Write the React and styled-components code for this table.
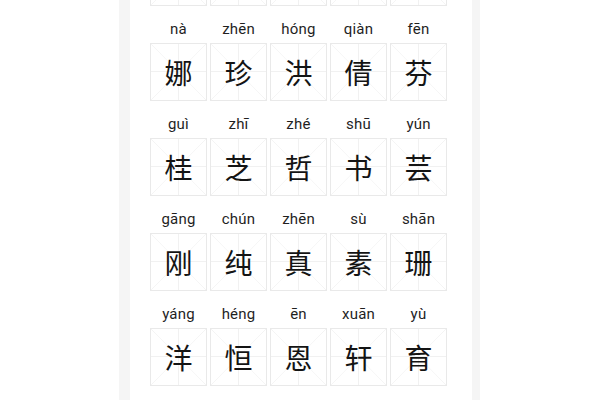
import React from 'react';
import styled, { createGlobalStyle } from 'styled-components';

const GlobalStyle = createGlobalStyle`
  html, body {
    margin: 0;
    padding: 0;
    background: #ffffff;
    overflow: hidden;
  }
  body {
    font-family: Roboto, "Noto Sans", "Noto Sans CJK SC", sans-serif;
  }
`;

const Page = styled.div`
  width: 600px;
  height: 400px;
  overflow: hidden;
  display: flex;
  justify-content: flex-start;
  padding-left: 119px;
  box-sizing: border-box;
`;

const Frame = styled.div`
  width: 361px;
  height: 100%;
  background: #f5f5f5;
  padding: 0 8px 0 11px;
  box-sizing: border-box;
`;

const Card = styled.div`
  background: #ffffff;
  height: 100%;
  padding: 0 25px 0 20px;
  box-sizing: border-box;
  overflow: hidden;
`;

const List = styled.div`
  margin-top: -78px;
  display: flex;
  flex-direction: column;
  gap: 11px;
`;

const Row = styled.div`
  display: grid;
  grid-template-columns: repeat(5, 57px);
  column-gap: 3px;
  row-gap: 2px;
`;

const Pinyin = styled.div`
  height: 24px;
  line-height: 24px;
  text-align: center;
  font-size: 15px;
  color: #1f1f1f;
  letter-spacing: 0.2px;
`;

const line = '#f1f1f1';
const diag = '#f4f4f4';

const Cell = styled.div`
  height: 58px;
  border: 1px solid #e9e9e9;
  box-sizing: border-box;
  display: flex;
  align-items: center;
  justify-content: center;
  font-family: "Noto Sans CJK SC", sans-serif;
  font-size: 28px;
  color: #141414;
  background:
    linear-gradient(to right, transparent calc(50% - 0.5px), ${line} calc(50% - 0.5px), ${line} calc(50% + 0.5px), transparent calc(50% + 0.5px)),
    linear-gradient(to bottom, transparent calc(50% - 0.5px), ${line} calc(50% - 0.5px), ${line} calc(50% + 0.5px), transparent calc(50% + 0.5px)),
    linear-gradient(to top right, transparent calc(50% - 0.6px), ${diag} 50%, transparent calc(50% + 0.6px)),
    linear-gradient(to bottom right, transparent calc(50% - 0.6px), ${diag} 50%, transparent calc(50% + 0.6px)),
    #ffffff;
`;

const rows = [
  [['lí', '丽'], ['xīn', '欣'], ['yǔ', '雨'], ['wén', '雯'], ['jìng', '静']],
  [['nà', '娜'], ['zhēn', '珍'], ['hóng', '洪'], ['qiàn', '倩'], ['fēn', '芬']],
  [['guì', '桂'], ['zhī', '芝'], ['zhé', '哲'], ['shū', '书'], ['yún', '芸']],
  [['gāng', '刚'], ['chún', '纯'], ['zhēn', '真'], ['sù', '素'], ['shān', '珊']],
  [['yáng', '洋'], ['héng', '恒'], ['ēn', '恩'], ['xuān', '轩'], ['yù', '育']],
  [['lǐ', '里'], ['huān', '欢'], ['dōng', '冬'], ['mèng', '梦'], ['yáo', '瑶']],
];

export default function App() {
  return (
    <>
      <GlobalStyle />
      <Page>
        <Frame>
          <Card>
            <List>
              {rows.map((row, i) => (
                <Row key={i}>
                  {row.map(([py], j) => (
                    <Pinyin key={'p' + j}>{py}</Pinyin>
                  ))}
                  {row.map(([, ch], j) => (
                    <Cell key={'c' + j}>{ch}</Cell>
                  ))}
                </Row>
              ))}
            </List>
          </Card>
        </Frame>
      </Page>
    </>
  );
}
